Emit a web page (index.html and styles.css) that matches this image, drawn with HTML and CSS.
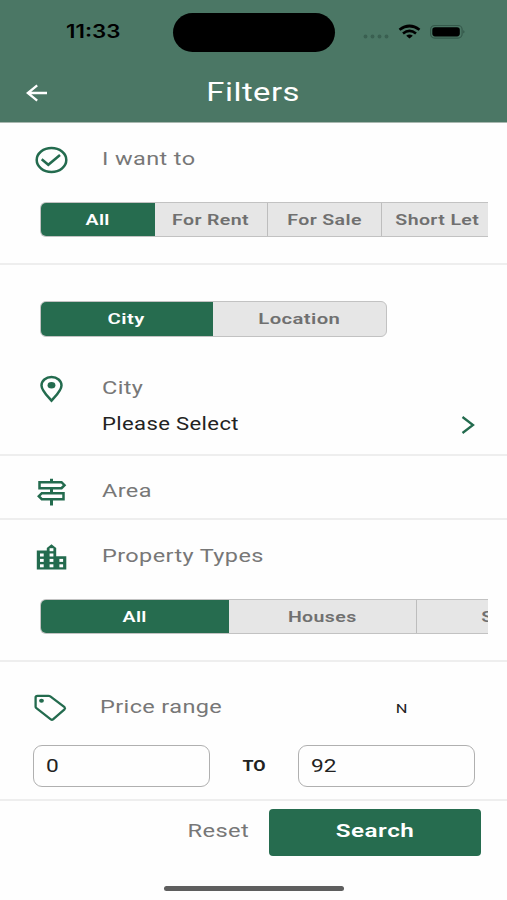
FILE: index.html
```html
<!DOCTYPE html>
<html lang="en">
<head>
<meta charset="utf-8">
<title>Filters</title>
<link rel="stylesheet" href="styles.css">
</head>
<body>
<header class="header">
  <div class="status">
    <span class="time wide">11:33</span>
    <div class="island"></div>
    <svg class="signals" width="104" height="18" viewBox="0 0 104 18">
      <g fill="#3a6051"><circle cx="3.500" cy="13.500" r="1.900"/><circle cx="10.500" cy="13.500" r="1.900"/><circle cx="17.500" cy="13.500" r="1.900"/><circle cx="24.500" cy="13.500" r="1.900"/></g>
      <g fill="none" stroke="#000" stroke-width="2.700"><path d="M37.500 6.800Q47.500-.8 57.500 6.800"/><path d="M41 10.500Q47.500 5.400 54 10.500"/></g>
      <path d="M44.200 12.700Q47.500 10.300 50.800 12.700L47.500 15.500Z"/>
      <rect x="68.600" y="2.500" width="31.500" height="12.600" rx="4" fill="none" stroke="#35594b" stroke-width="1.200"/>
      <rect x="70.300" y="4.200" width="27.500" height="9.200" rx="2.800"/>
      <path d="M101.200 7Q104 8.800 101.200 10.600Z" fill="#35594b"/>
    </svg>
  </div>
  <div class="nav">
    <svg class="back" width="22" height="18" viewBox="0 0 22 18"><path d="M21 9H2M11.200 1.300L1.800 9L11.200 16.700" fill="none" stroke="#fff" stroke-width="2.300"/></svg>
    <h1 class="title wide">Filters</h1>
  </div>
</header>
<main>
  <section class="section want">
    <div class="row">
      <svg class="icon" width="34" height="28" viewBox="0 0 34 28"><g fill="none" stroke="#236b4e" stroke-width="2.500"><ellipse cx="17.500" cy="14" rx="14.800" ry="11.900"/><path d="M7.700 13.300L14.300 18.800L26 9"/></g></svg>
      <span class="label wide">I want to</span>
    </div>
    <div class="segments scroll">
      <button class="seg active"><span class="wide">All</span></button>
      <button class="seg"><span class="wide">For Rent</span></button>
      <button class="seg"><span class="wide">For Sale</span></button>
      <button class="seg"><span class="wide">Short Let</span></button>
    </div>
  </section>
  <section class="section city">
    <div class="segments pair">
      <button class="seg active"><span class="wide">City</span></button>
      <button class="seg"><span class="wide">Location</span></button>
    </div>
    <div class="row">
      <svg class="icon" width="34" height="28" viewBox="0 0 34 28"><path d="M17.500 25.600C13.500 21 7.500 15.500 7.500 10.400C7.500 5.800 11.800 2 17.500 2S27.500 5.800 27.500 10.400C27.500 15.500 21.500 21 17.500 25.600Z" fill="none" stroke="#236b4e" stroke-width="2.500"/><ellipse cx="17.500" cy="10.300" rx="3.900" ry="3.200" fill="#236b4e"/></svg>
      <span class="label wide">City</span>
    </div>
    <div class="picker">
      <span class="value wide">Please Select</span>
      <svg width="14" height="20" viewBox="0 0 14 20"><path d="M1.500 2L12 10L1.500 18" fill="none" stroke="#236b4e" stroke-width="2.300"/></svg>
    </div>
  </section>
  <section class="section area">
    <div class="row">
      <svg class="icon" width="34" height="28" viewBox="0 0 34 28"><g fill="none" stroke="#236b4e" stroke-width="2.500"><path d="M5.500 4.200H27.500L30.500 7.200L27.500 10.200H5.500ZM29.500 15.200H7.800L4.800 18.200L7.800 21.200H29.500Z"/><path d="M17.500 .8V4.200M17.500 10.200V15.200M17.500 21.200V27.500" stroke-width="3"/></g></svg>
      <span class="label wide">Area</span>
    </div>
  </section>
  <section class="section types">
    <div class="row">
      <svg class="icon" width="34" height="28" viewBox="0 0 34 28"><path d="M2.800 7.500H12.800V5L17.500 1.300L22.200 5V13.300H32.300V26.500H2.800Z" fill="#236b4e"/><g fill="#fff"><rect x="6" y="10.500" width="3.700" height="3"/><rect x="6" y="15.900" width="3.700" height="3"/><rect x="6" y="21.300" width="3.700" height="3"/><rect x="15.600" y="5.200" width="3.800" height="3"/><rect x="15.600" y="10.500" width="3.800" height="3"/><rect x="15.600" y="15.900" width="3.800" height="3"/><rect x="15.600" y="21.300" width="3.800" height="3"/><rect x="25.400" y="15.900" width="3.700" height="3"/><rect x="25.400" y="21.300" width="3.700" height="3"/></g></svg>
      <span class="label wide">Property Types</span>
    </div>
    <div class="segments scroll large">
      <button class="seg active"><span class="wide">All</span></button>
      <button class="seg"><span class="wide">Houses</span></button>
      <button class="seg"><span class="wide">Shops</span></button>
    </div>
  </section>
  <section class="section price">
    <div class="row">
      <svg class="icon" width="34" height="28" viewBox="0 0 34 28"><path d="M3.500 1.800H14.500Q15.500 1.800 16.300 2.400L30.500 13.200Q31.500 14.300 30.500 15.300L19 25.300Q18 26.200 16.800 25.300L2.400 14.200Q1.600 13.600 1.600 12.800V3.500Q1.600 1.800 3.500 1.800Z" fill="none" stroke="#236b4e" stroke-width="2.300"/><ellipse cx="7.500" cy="6.800" rx="2.400" ry="2" fill="#236b4e"/></svg>
      <span class="label wide">Price range</span>
      <span class="currency wide">N</span>
    </div>
    <div class="range">
      <div class="field"><span class="wide">0</span></div>
      <span class="to"><span class="wide">TO</span></span>
      <div class="field"><span class="wide">92</span></div>
    </div>
  </section>
</main>
<footer class="footer">
  <div class="actions">
    <span class="reset wide">Reset</span>
    <button class="search"><span class="wide">Search</span></button>
  </div>
  <div class="home"></div>
</footer>
</body>
</html>
```
FILE: styles.css
```css
* { box-sizing: border-box; }

body {
  margin: 0;
  width: 507px;
  height: 900px;
  overflow: hidden;
  background: #fefefe;
  color: #222;
  font-family: Roboto, "Liberation Sans", sans-serif;
}

button { border: 0; margin: 0; padding: 0; font: inherit; color: inherit; }

.wide {
  display: inline-block;
  white-space: nowrap;
  transform: scaleX(var(--stretch, 1.26));
  transform-origin: var(--origin, center);
}

.header { height: 123px; background: #4b7765; border-bottom: 1px solid #a9b8b0; }

.status { display: grid; grid-template-columns: 173px 162px 172px; align-items: center; height: 64px; }
.time { --origin: left; --stretch: 1.24; margin-left: 66px; font: 600 18px/20px Inter, sans-serif; color: #000; }
.island { height: 39px; border-radius: 20px; background: #000; }
.signals { margin-left: 27px; }

.nav { display: grid; grid-template-columns: 74px 359px 74px; align-items: center; height: 58px; }
.back { margin-left: 26px; }
.title { margin: -2px 0 0; justify-self: center; font-size: 26px; line-height: 30px; font-weight: 400; color: #fff; letter-spacing: .4px; }

.section { border-bottom: 2px solid #eee; }
.row { display: flex; align-items: center; height: 28px; padding-left: 34px; }
.icon { flex: none; }
.label { --origin: left; --stretch: 1.27; margin-left: 34px; font-size: 18.500px; line-height: 24px; color: #777; letter-spacing: .3px; margin-top: -2px; }

.segments { display: flex; height: 35px; margin-left: 40px; border: 1px solid #c2c2c2; border-radius: 6px; background: #e6e6e6; overflow: hidden; }
.scroll { width: 448px; border-right: 0; border-radius: 6px 0 0 6px; }
.pair { width: 347px; height: 36px; }
.seg { flex: 0 0 113.500px; height: 100%; border-right: 1px solid #bdbdbd; background: transparent; color: #707070; font-size: 15.500px; line-height: 34px; font-weight: 600; letter-spacing: .3px; }
.seg.active { margin: -1px 0 -1px -1px; height: auto; border-right: 0; background: #266c4f; color: #fff; flex-basis: 114.500px; }
.large .seg { flex-basis: 188px; }
.large .seg.active { flex-basis: 189px; }
.large .seg:last-child { flex-basis: 186px; }
.pair .seg { --stretch: 1.31; flex-basis: 173px; border-right: 0; }

.want { height: 142px; padding-top: 23px; }
.want .segments { margin-top: 28px; }

.city { height: 191px; padding-top: 36px; }
.city .row { margin-top: 38px; }
.picker { display: flex; align-items: center; justify-content: space-between; height: 28px; margin-top: 8px; padding: 0 32px 0 102px; }
.value { --origin: left; --stretch: 1.225; font-size: 18px; line-height: 24px; letter-spacing: .3px; margin-top: -3px; }

.area { height: 64px; padding-top: 22px; }
.types { height: 142px; padding-top: 22px; }
.types .row { padding-top: 2px; }
.types .segments { margin-top: 29px; }

.price { height: 139px; padding-top: 32px; }
.price .label { margin-left: 32px; }
.currency { margin-left: 201px; font-size: 13px; line-height: 16px; margin-top: 2px; }
.range { display: flex; align-items: center; margin-top: 23px; padding: 0 32px 0 33px; }
.field { --origin: left; width: 177px; height: 42px; padding-left: 12px; border: 1.500px solid #b0b0b0; border-radius: 9px; font-size: 18px; line-height: 40px; }
.to { --stretch: 1.15; flex: 1; text-align: center; font-size: 15.500px; font-weight: 700; }

.footer { height: 99px; }
.actions { display: flex; justify-content: flex-end; align-items: center; padding: 8px 26px 0 0; }
.reset { --origin: right; --stretch: 1.28; margin-right: 20px; font-size: 18.500px; line-height: 24px; color: #777; letter-spacing: .3px; margin-top: -3px; }
.search { --stretch: 1.31; width: 212px; height: 47px; border-radius: 4px; background: #266c4f; color: #fff; font-size: 18.500px; line-height: 43px; padding-bottom: 2px; font-weight: 600; letter-spacing: .4px; }
.home { width: 180px; height: 5px; margin: 30px auto 0 164px; border-radius: 3px; background: #5e5e5e; }
```
